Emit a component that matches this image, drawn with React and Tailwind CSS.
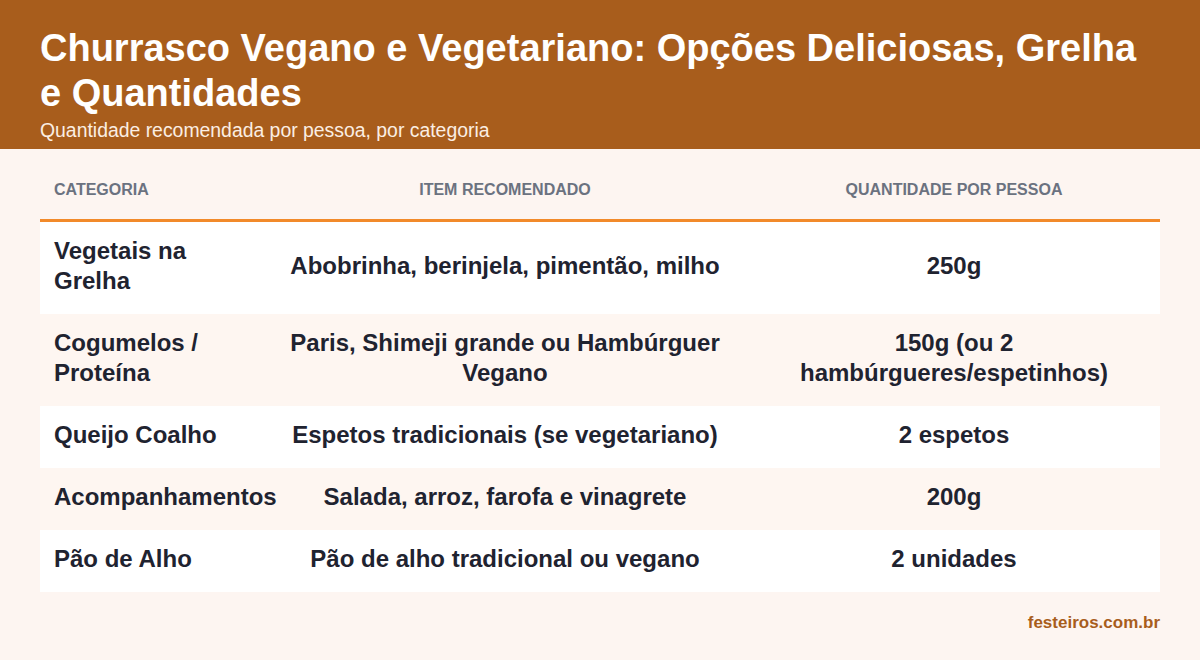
import React from 'react';

const rows = [
  { cat: 'Vegetais na Grelha', item: 'Abobrinha, berinjela, pimentão, milho', qty: '250g' },
  { cat: 'Cogumelos / Proteína', item: 'Paris, Shimeji grande ou Hambúrguer Vegano', qty: '150g (ou 2 hambúrgueres/espetinhos)' },
  { cat: 'Queijo Coalho', item: 'Espetos tradicionais (se vegetariano)', qty: '2 espetos' },
  { cat: 'Acompanhamentos', item: 'Salada, arroz, farofa e vinagrete', qty: '200g' },
  { cat: 'Pão de Alho', item: 'Pão de alho tradicional ou vegano', qty: '2 unidades' },
];

function App() {
  return (
    <div className="w-[1200px] h-[660px] bg-[#fdf5f1] [font-family:Liberation_Sans,Arimo,sans-serif] flex flex-col overflow-hidden">
      <header className="bg-[#a85d1c] px-[40px] pt-[26px] h-[149px]">
        <h1 className="text-white font-bold text-[38px] leading-[45px]">
          Churrasco Vegano e Vegetariano: Opções Deliciosas, Grelha e Quantidades
        </h1>
        <p className="text-[#fbeee3] text-[19.4px] leading-[24px] mt-[2px]">
          Quantidade recomendada por pessoa, por categoria
        </p>
      </header>

      <main className="px-[40px] pt-[13px] flex-1 flex flex-col">
        <div className="grid grid-cols-[221px_488px_410px] border-b-[3px] border-[#f28a2a] text-[16px] font-bold uppercase text-[#6b7280] leading-[19px]">
          <div className="px-[14px] pt-[18px] pb-[20px]">Categoria</div>
          <div className="px-[14px] pt-[18px] pb-[20px] text-center">Item Recomendado</div>
          <div className="px-[14px] pt-[18px] pb-[20px] text-center">Quantidade por Pessoa</div>
        </div>

        {rows.map((r, i) => (
          <div
            key={r.cat}
            className={`grid grid-cols-[221px_488px_410px] text-[24px] font-bold leading-[30px] text-[#1f2330] ${i % 2 === 0 ? 'bg-white' : 'bg-[#fef6f1]'}`}
          >
            <div className="px-[14px] pt-[14px] pb-[18px] flex items-center">{r.cat}</div>
            <div className="px-[14px] pt-[14px] pb-[18px] text-center flex items-center justify-center">{r.item}</div>
            <div className="px-[14px] pt-[14px] pb-[18px] text-center flex items-center justify-center">{r.qty}</div>
          </div>
        ))}

        <div className="flex justify-end pt-[21px]">
          <span className="text-[#a85d1c] font-bold text-[17px] leading-[20px]">festeiros.com.br</span>
        </div>
      </main>
    </div>
  );
}

export default App;
